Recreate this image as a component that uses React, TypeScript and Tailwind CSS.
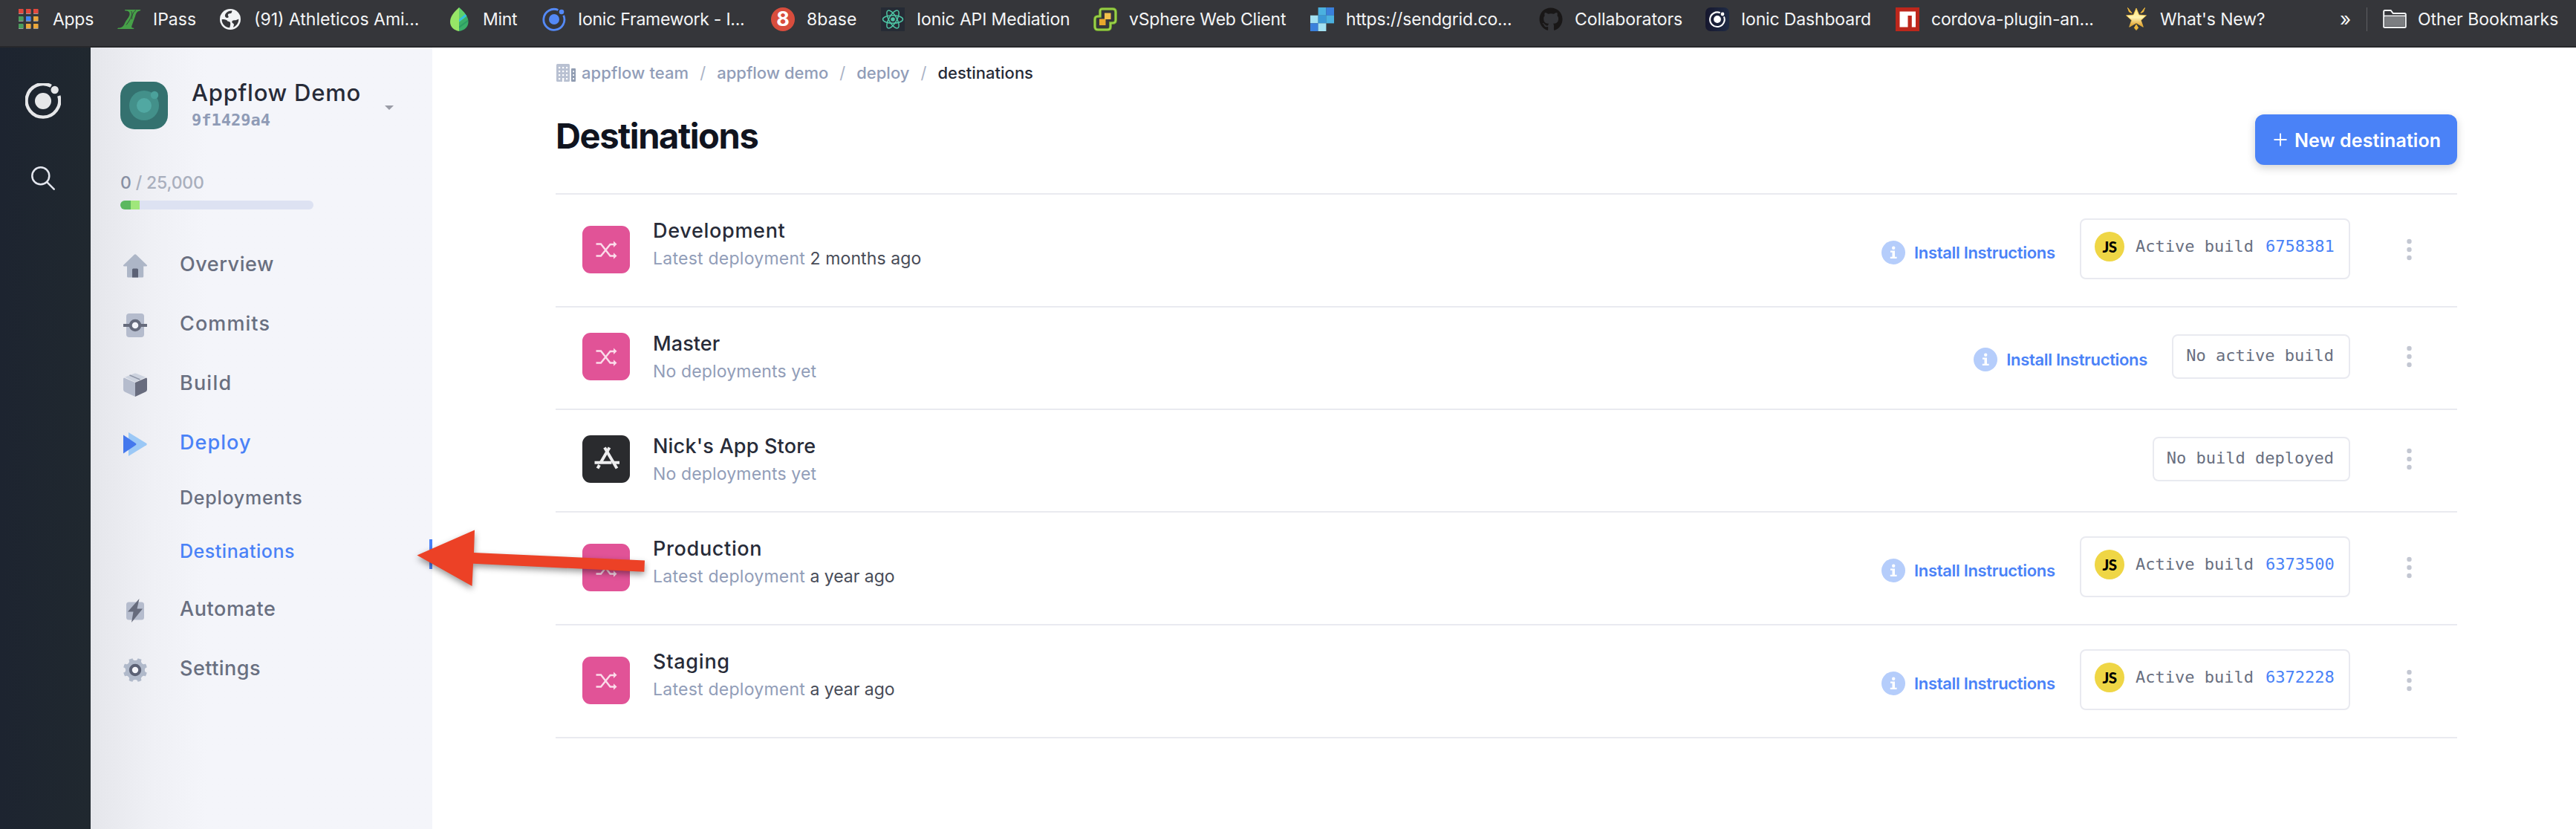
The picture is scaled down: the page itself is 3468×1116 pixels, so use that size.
import type { ReactNode } from "react";
import { FaGithub } from "react-icons/fa";

/* ---------- Bookmark icons ---------- */

function AppsIcon() {
  const cells = [
    ["#e2483d", 2, 2], ["#e2483d", 12, 2], ["#e2483d", 22, 2],
    ["#4a9e5c", 2, 12], ["#4285f4", 12, 12], ["#eba73a", 22, 12],
    ["#4a9e5c", 2, 22], ["#eba73a", 12, 22], ["#eba73a", 22, 22],
  ] as const;
  return (
    <svg className="size-8" viewBox="0 0 32 32">
      {cells.map(([fill, x, y]) => (
        <g key={`${x}-${y}`}>
          <rect x={x} y={y + 1} width="6.4" height="6" fill="#9a9c9f" />
          <rect x={x} y={y} width="6.4" height="6" fill={fill} />
        </g>
      ))}
    </svg>
  );
}

function IPassIcon() {
  return (
    <svg className="size-8" viewBox="0 0 32 32">
      <path
        d="M10 3h21.500l-1 1.600c-3.500.3-5 2.800-6.300 6.800l-4.700 13c-.8 2.500-.2 3 3 3.300l-.5 1.300H0l1-1.500c5.500.2 7.300-2.500 9-6.500 2-4.500 6-7.500 6.500-11.500.3-3-1-5-6-5z"
        fill="#46a048"
      />
      <path d="M18.500 5c2.500 2.500 1 9-6.500 18.500M25 4c-3 1-5.500 6-5.500 12" stroke="#35383c" strokeWidth="0.9" fill="none" />
    </svg>
  );
}

function GlobeIcon() {
  return (
    <svg className="size-8" viewBox="0 0 32 32">
      <circle cx="16" cy="16" r="14" fill="#f1f3f5" />
      <path d="M4.600 16.200c3.600-.4 7 .2 8 2.600 2 .2 3.800.6 3.600 3.200-.1 1.500-.2 2.600-1 5.300C9 27 4.600 22 4.600 16.200z" fill="#35363a" />
      <path d="M18.500 4.700c-.6 1.500-.2 3-2 3.300-2 .3-3.800.6-3.700 2.200.2 1.300 1.500 2 .6 3.300-1 1-3 .2-3.800-.6C8.500 12 8.600 9.500 10.500 7.500 12.500 5.500 15.500 4.300 18.500 4.700z" fill="#35363a" />
      <path d="M27.300 15.500c.2 5-3 9.700-7.300 11.200.2-1.700 1.400-2.500.8-4.200-.6-1.400-2.600-1.300-2.500-3 .1-1.500 1.500-2.300 3.200-2.200 2 .1 3.800-.5 5.800-1.800z" fill="#35363a" />
    </svg>
  );
}

function MintIcon() {
  return (
    <svg className="size-8" viewBox="0 0 32 32">
      <path d="M16 0C9 6.500 4 12 4 19.500 4 26.500 9.500 31 16 32z" fill="#97e567" />
      <path d="M16 0c7 6.500 12.500 12 12.500 19.500C28.500 26.500 23 31 16 32z" fill="#3aae68" />
      <path d="M16 0c5 4.500 8.500 8 10.300 12L16 20z" fill="#5fcf6d" />
      <path d="M26.300 11.500L16 19.500v-3.500l8.500-7z" fill="#32bfe0" />
      <path d="M28 16.500L16 25.500v2.500l12-9z" fill="#2c9b63" />
    </svg>
  );
}

function IonicMark({ color, ring, dot }: { color: string; ring: number; dot: number }) {
  return (
    <>
      <path
        d="M21.400 3.200A14 14 0 1 0 28.700 10.500"
        transform="translate(0 .3)"
        fill="none"
        stroke={color}
        strokeWidth={ring}
      />
      <circle cx="16" cy="16" r="7" fill={color} />
      <circle cx="26" cy="6" r={dot} fill={color} />
    </>
  );
}

function IonicIcon() {
  return (
    <svg className="size-8" viewBox="0 0 32 32">
      <IonicMark color="#5489f6" ring={2.8} dot={3.3} />
    </svg>
  );
}

function EightBaseIcon() {
  return (
    <span className="flex size-8 items-center justify-center rounded-full bg-[#d84d3d] text-[27px] leading-8 font-bold text-white">
      8
    </span>
  );
}

function ReactIcon() {
  return (
    <svg className="size-8" viewBox="0 0 32 32">
      <rect width="32" height="32" fill="#262b35" />
      <g fill="none" stroke="#4ec5a5" strokeWidth="1.500">
        <ellipse cx="16" cy="16" rx="13.500" ry="5.200" />
        <ellipse cx="16" cy="16" rx="13.500" ry="5.200" transform="rotate(60 16 16)" />
        <ellipse cx="16" cy="16" rx="13.500" ry="5.200" transform="rotate(120 16 16)" />
      </g>
      <circle cx="16" cy="16" r="2.800" fill="#4ec5a5" />
    </svg>
  );
}

function VSphereIcon() {
  return (
    <svg className="size-8" viewBox="0 0 32 32">
      <path
        d="M12 2h14q4 0 4 4v11q0 4-4 4h-3v5q0 4-4 4H6q-4 0-4-4V16q0-4 4-4h3V5q0-3 3-3z"
        fill="#35363a"
        stroke="#7fb82c"
        strokeWidth="3.600"
      />
      <path d="M12 2h14q4 0 4 4v11q0 4-4 4h-3v5q0 4-4 4H6q-4 0-4-4V16q0-4 4-4h3V5q0-3 3-3z" fill="none" stroke="#a9dc60" strokeWidth="1.200" />
      <rect x="15" y="7.500" width="8.500" height="8.500" fill="#f3c14c" />
      <rect x="8" y="15.500" width="8.500" height="8.500" fill="#e8a72c" />
    </svg>
  );
}

function SendgridIcon() {
  return (
    <svg className="size-8" viewBox="0 0 32 32">
      <rect x="10.600" width="10.800" height="10.800" fill="#4bb1df" />
      <rect x="21.300" width="10.700" height="10.800" fill="#3a80dc" />
      <rect y="10.700" width="10.700" height="10.700" fill="#a3e1f2" />
      <rect x="10.600" y="10.700" width="10.800" height="10.700" fill="#3b98d6" />
      <rect x="21.300" y="10.700" width="10.700" height="10.700" fill="#4bb1df" />
      <rect y="21.300" width="10.700" height="10.700" fill="#3a80dc" />
      <rect x="10.600" y="21.300" width="10.800" height="10.700" fill="#a3e1f2" />
    </svg>
  );
}

function DashboardIcon() {
  return (
    <svg className="size-8" viewBox="0 0 32 32">
      <defs>
        <linearGradient id="dash" x1="0" x2="1">
          <stop offset="0" stopColor="#16172e" />
          <stop offset="1" stopColor="#1f2b45" />
        </linearGradient>
      </defs>
      <rect width="32" height="32" rx="7" fill="url(#dash)" />
      <g transform="translate(4.800 4.800) scale(.7)">
        <IonicMark color="#ffffff" ring={3} dot={3.4} />
      </g>
    </svg>
  );
}

function NpmIcon() {
  return (
    <svg className="size-8" viewBox="0 0 32 32">
      <rect width="32" height="32" fill="#bd271c" />
      <path d="M5.500 5.500h21.500v21h-5.200V11h-5.300v15.500H5.500z" fill="#fff" />
    </svg>
  );
}

function StarIcon() {
  return (
    <svg className="size-8" viewBox="0 0 32 32">
      <defs>
        <linearGradient id="star" x1="0" x2="0" y1="0" y2="1">
          <stop offset="0" stopColor="#ffe477" />
          <stop offset=".5" stopColor="#fff4b0" />
          <stop offset="1" stopColor="#dd9420" />
        </linearGradient>
      </defs>
      <path d="M4.500.5L10 7.500 6.500 6zM27.500.5L22 7.500 25.500 6zM16 23l2.600 4.500L16 30.500l-2.600-3z" fill="#f0b93c" stroke="#f0b93c" strokeWidth="1" />
      <path d="M16 1l3.800 9 9.700.8-7.200 6.500 3 9L16 21l-9.300 5.300 3-9L2.500 10.800l9.700-.8z" fill="url(#star)" stroke="#eebb40" strokeWidth=".8" />
    </svg>
  );
}

function FolderIcon() {
  return (
    <svg className="size-8" viewBox="0 0 32 32">
      <path d="M1.200 27V5.500q0-1.500 1.500-1.500h8l3 4h15.600q1.500 0 1.500 1.500V25.500q0 1.500-1.500 1.500H2.700q-1.500 0-1.500-1.500z" fill="#35363a" stroke="#f1f3f4" strokeWidth="2" />
      <path d="M2.500 13h27v12.500h-27z" fill="#7c7e81" />
      <path d="M2 11.500h28" stroke="#f1f3f4" strokeWidth="1.800" />
    </svg>
  );
}

function GithubIcon() {
  return <FaGithub className="size-8 text-[#191717]" />;
}

const bookmarks: { label: string; icon: () => ReactNode; cls: string }[] = [
  { label: "Apps", icon: AppsIcon, cls: "w-[135px] tracking-[-0.3px]" },
  { label: "IPass", icon: IPassIcon, cls: "w-[136px]" },
  { label: "(91) Athleticos Ami...", icon: GlobeIcon, cls: "w-[308px]" },
  { label: "Mint", icon: MintIcon, cls: "w-[128px] tracking-[-0.3px]" },
  { label: "Ionic Framework - I...", icon: IonicIcon, cls: "w-[308px] tracking-[-0.24px]" },
  { label: "8base", icon: EightBaseIcon, cls: "w-[148px] tracking-[0.1px]" },
  { label: "Ionic API Mediation", icon: ReactIcon, cls: "w-[286px] tracking-[-0.14px]" },
  { label: "vSphere Web Client", icon: VSphereIcon, cls: "w-[292px] tracking-[-0.2px]" },
  { label: "https://sendgrid.co...", icon: SendgridIcon, cls: "w-[308px] tracking-[-0.16px]" },
  { label: "Collaborators", icon: GithubIcon, cls: "w-[224px] tracking-[-0.07px]" },
  { label: "Ionic Dashboard", icon: DashboardIcon, cls: "w-[256px] tracking-[-0.16px]" },
  { label: "cordova-plugin-an...", icon: NpmIcon, cls: "w-[308px] tracking-[-0.18px]" },
  { label: "What's New?", icon: StarIcon, cls: "w-[290px] tracking-[-0.15px]" },
];

function BookmarkBar() {
  return (
    <header className="flex h-16 items-center border-b-2 border-[#27282b] bg-[#35363a] pb-[10px] pl-[23px] text-[23px] leading-8 whitespace-nowrap text-[#f4f5f6]">
      {bookmarks.map(({ label, icon: Icon, cls }) => (
        <div key={label} className={`flex shrink-0 items-center gap-4 ${cls}`}>
          <Icon />
          <span>{label}</span>
        </div>
      ))}
      <span className="w-[36px] text-[26px] leading-8">»</span>
      <div className="h-8 w-px bg-[#5f6063]" />
      <div className="ml-[21px] flex items-center gap-[15px]">
        <FolderIcon />
        <span>Other Bookmarks</span>
      </div>
    </header>
  );
}

/* ---------- Sidebar ---------- */

function HomeIcon() {
  return (
    <svg className="size-8" viewBox="0 0 32 32">
      <path d="M14.800.8q1.200-1.200 2.400 0L32 15q.2 1.500-1 1.500h-3.800V30q0 1.500-1.500 1.500H6.500Q5 31.500 5 30V16.500H1Q-.2 16.500 0 15z" fill="#adb6c7" />
      <path d="M12 31.500V21q0-1.500 1.500-1.500h5q1.500 0 1.500 1.500v10.500z" fill="#5b6175" />
    </svg>
  );
}

function CommitsIcon() {
  return (
    <svg className="size-8" viewBox="0 0 32 32">
      <rect x="4" width="24" height="32" rx="4" fill="#b5bccd" />
      <rect y="14" width="32" height="4" fill="#666b7c" />
      <circle cx="16" cy="16" r="6.300" fill="#f4f5fa" stroke="#666b7c" strokeWidth="4" />
    </svg>
  );
}

function BuildIcon() {
  return (
    <svg className="size-8" viewBox="0 0 32 32">
      <path d="M14 1q2-.8 4 0l12 4.700L16 12.500 2 5.700z" fill="#cdd3df" />
      <path d="M1 6.500L16 13v19L2 25.500Q0 24.600 0 22.500V8q0-1 1-1.500z" fill="#b5bccd" />
      <path d="M31 6.500L16 13v19l14-6.500q2-.9 2-3V8q0-1-1-1.500z" fill="#686c7e" />
      <path d="M8.500 3l14 6" stroke="#9097a8" strokeWidth="1.500" />
    </svg>
  );
}

function DeployIcon() {
  return (
    <svg className="size-8" viewBox="0 0 32 32">
      <path d="M7 0l24 14.800q1.500 1.200 0 2.400L7 32z" fill="#9bc8f6" />
      <path d="M0 3.500l17 11.500q1 1 0 2L0 28.500z" fill="#4478ed" />
    </svg>
  );
}

function AutomateIcon() {
  return (
    <svg className="size-8" viewBox="0 0 32 32">
      <rect x="4" y="4.500" width="24" height="24" rx="3.500" fill="#b5bccd" />
      <path d="M21.500 0L6 17.500h7.500L11 32l15-18.500h-7.500z" fill="#666b7c" />
    </svg>
  );
}

function SettingsIcon() {
  const notches = [0, 45, 90, 135, 180, 225, 270, 315];
  return (
    <svg className="size-8" viewBox="0 0 32 32">
      <mask id="gear">
        <rect width="32" height="32" fill="#fff" />
        {notches.map((a) => (
          <circle key={a} cx="16" cy="-.5" r="3.600" fill="#000" transform={`rotate(${a} 16 16)`} />
        ))}
      </mask>
      <circle cx="16" cy="16" r="16.200" fill="#b0b9ca" mask="url(#gear)" />
      <circle cx="16" cy="16" r="6.200" fill="#f4f5fa" stroke="#5b6175" strokeWidth="4" />
    </svg>
  );
}

function NavItem({ icon, label, cls }: { icon: ReactNode; label: string; cls: string }) {
  return (
    <div className={`flex h-20 items-center pl-[44px] text-[27px] leading-10 font-medium ${cls}`}>
      <span className="mt-1">{icon}</span>
      <span className="ml-11">{label}</span>
    </div>
  );
}

function Rail() {
  return (
    <aside className="flex w-[122px] shrink-0 flex-col bg-linear-to-r from-[#1d2430] to-[#20282f] pt-12 pl-[34px]">
      <svg className="size-12" viewBox="0 0 48 48">
        <path d="M34.800 3.900A22.300 22.300 0 1 0 45.300 17" fill="none" stroke="#e6e7e9" strokeWidth="4.400" />
        <circle cx="24" cy="24" r="11" fill="#e6e7e9" />
        <circle cx="39.700" cy="9" r="5.200" fill="#e6e7e9" />
      </svg>
      <svg className="mt-16 ml-2 size-8" viewBox="0 0 32 32" fill="none" stroke="#e3e6ee" strokeWidth="2.500" strokeLinecap="round">
        <circle cx="12.800" cy="12.800" r="11.500" />
        <path d="M21.200 21.200L30.700 30.700" />
      </svg>
    </aside>
  );
}

function Sidebar() {
  return (
    <nav className="w-[460px] shrink-0 bg-linear-to-r from-[#e5e6eb] via-[#eff0f5] via-[18%] to-[#f4f5fa] to-[34%]">
      <div className="flex pt-[46px] pl-10">
        <svg className="size-16" viewBox="0 0 64 64">
          <rect width="64" height="64" rx="19" fill="#34716f" />
          <circle cx="32" cy="32" r="20" fill="#43908a" />
          <circle cx="32" cy="32" r="10" fill="#51a8a2" />
          <circle cx="46" cy="18" r="5.200" fill="#4ba19b" />
        </svg>
        <div className="ml-8 w-[260px] whitespace-nowrap">
          <div className="-mt-[5px] text-[31px] leading-10 font-medium tracking-[0.75px] text-[#272b38]">Appflow Demo</div>
          <div className="mt-[2px] font-['DejaVu_Sans_Mono',monospace] text-[22px] leading-[30px] font-bold text-[#8f9bb6]">9f1429a4</div>
        </div>
        <svg className="mt-8 h-[6px] w-3" viewBox="0 0 12 6">
          <path d="M0 0h12L6 6z" fill="#9a9ca6" />
        </svg>
      </div>
      <div className="mt-[53px] pl-10">
        <div className="text-[23px] leading-8 font-medium tracking-[-0.16px] text-[#a9afbd]">
          <span className="text-[#878fa2]">0</span> / 25,000
        </div>
        <div className="mt-[8px] flex h-3 w-[260px] overflow-hidden rounded-full bg-[#dde2f2]">
          <div className="w-[14px] bg-[#5bb85f]" />
          <div className="w-3 bg-[#a0e77b]" />
        </div>
      </div>
      <div className="mt-[34px] text-[#696f80]">
        <NavItem icon={<HomeIcon />} label="Overview" cls="tracking-[0.55px]" />
        <NavItem icon={<CommitsIcon />} label="Commits" cls="tracking-[1.1px]" />
        <NavItem icon={<BuildIcon />} label="Build" cls="tracking-[1.2px]" />
        <NavItem icon={<DeployIcon />} label="Deploy" cls="tracking-[1.05px] text-[#4a82f7]" />
        <div className="pl-[120px] text-[25px] leading-[69px] font-medium">
          <div className="h-[72px] tracking-[0.75px]">Deployments</div>
          <div className="relative h-[72px] tracking-[0.53px] text-[#4a82f7]">
            Destinations
            <span className="absolute top-[18px] right-0 h-10 w-1 bg-[#4a82f7]" />
          </div>
        </div>
        <NavItem icon={<AutomateIcon />} label="Automate" cls="tracking-[0.6px]" />
        <NavItem icon={<SettingsIcon />} label="Settings" cls="tracking-[0.47px]" />
      </div>
    </nav>
  );
}

/* ---------- Main content ---------- */

function BuildingIcon() {
  const cols = [3, 8, 13];
  const rows = [4, 9, 14, 19];
  return (
    <svg className="ml-px h-6 w-[26px]" viewBox="0 0 26 24">
      <rect width="18" height="24" rx="1.500" fill="#b9c1d2" />
      <rect x="20" y="6" width="6" height="18" rx="1" fill="#919db2" />
      {rows.map((y) => cols.map((x) => <rect key={`${x}-${y}`} x={x} y={y} width="2.200" height="2.200" fill="#fff" />))}
      <rect x="8" y="19" width="2.200" height="5" fill="#fff" />
      <rect x="22.200" y="9.300" width="1.800" height="2" fill="#fff" />
      <rect x="22.200" y="14" width="1.800" height="2" fill="#fff" />
      <rect x="22.200" y="19" width="1.800" height="2" fill="#fff" />
    </svg>
  );
}

function Slash() {
  return <span className="w-[38px] text-center font-normal text-[#aab3c6]">/</span>;
}

function WebTile() {
  return (
    <svg className="size-16" viewBox="0 0 64 64">
      <rect width="64" height="64" rx="11" fill="#e15397" />
      <g stroke="#fbdcea" strokeWidth="2.400" fill="none">
        <path d="M18.500 24.500H25L37.500 40.500H42M18.500 40.500H25L37.500 25H42" />
      </g>
      <path d="M42 20.500l4.500 4.300-4.500 4.200zM42 36.200l4.500 4.300-4.500 4.200z" fill="#fbdcea" />
    </svg>
  );
}

function AppStoreTile() {
  return (
    <svg className="size-16" viewBox="0 0 64 64">
      <rect width="64" height="64" rx="11" fill="#2a2b2e" />
      <g stroke="#eeeeef" strokeWidth="4" fill="none">
        <path d="M30 16.500L46.500 44.500" />
        <path d="M36.500 16.500L24.500 37M23 40L20.500 44.500" />
        <path d="M16.500 36.800H39.500M43 36.800H50" />
      </g>
    </svg>
  );
}

type Destination = {
  name: string;
  nameCls: string;
  when?: string;
  whenCls?: string;
  build?: string;
  store?: boolean;
};

const destinations: Destination[] = [
  { name: "Development", nameCls: "tracking-[0.7px]", when: "2 months ago", whenCls: "tracking-[0.1px]", build: "6758381" },
  { name: "Master", nameCls: "tracking-[0.1px]" },
  { name: "Nick's App Store", nameCls: "tracking-[0.2px]", store: true },
  { name: "Production", nameCls: "tracking-[0.66px]", when: "a year ago", whenCls: "tracking-[-0.05px]", build: "6373500" },
  { name: "Staging", nameCls: "tracking-[0.75px]", when: "a year ago", whenCls: "tracking-[-0.05px]", build: "6372228" },
];

function InstallLink() {
  return (
    <a className="mt-2 flex w-[267px] items-center text-[22px] leading-8 font-semibold tracking-[-0.32px] whitespace-nowrap text-[#4a82f7]">
      <svg className="mr-3 size-8" viewBox="0 0 32 32">
        <circle cx="16" cy="16" r="16" fill="#b5cdfb" />
        <circle cx="16.200" cy="9.800" r="2.200" fill="#fff" />
        <path d="M12 13.500h6V21.700h2.600V24H11.800V21.700h2.700V15.800H12z" fill="#fff" />
      </svg>
      Install Instructions
    </a>
  );
}

function BuildBadge({ d }: { d: Destination }) {
  if (d.build) {
    return (
      <div className="mb-0.5 flex h-[82px] w-[364px] items-start rounded-lg border-2 border-[#e9eaf0] pt-4 pl-[18px] font-['DejaVu_Sans_Mono',monospace] text-[22px] leading-10 whitespace-nowrap text-[#696f80]">
        <span className="mr-[15px] flex size-10 items-center justify-center rounded-full bg-[#efd645] pb-px font-[Lato,sans-serif] text-[20.5px] font-black tracking-[-0.5px] text-black">
          JS
        </span>
        Active build
        <a className="ml-4 text-[#4a82f7]">{d.build}</a>
      </div>
    );
  }
  return (
    <div className="flex h-[60px] items-center rounded-lg border-2 border-[#e9eaf0] pr-[20px] pb-[3px] pl-[17px] font-['DejaVu_Sans_Mono',monospace] text-[22px] leading-8 whitespace-nowrap text-[#696f80]">
      {d.store ? "No build deployed" : "No active build"}
    </div>
  );
}

function DestinationRow({ d }: { d: Destination }) {
  const size = d.build ? "h-[152px] pb-0.5" : "h-[138px] pb-1";
  return (
    <li className={`flex items-center border-t-2 border-[#e9eaf0] pl-9 ${size}`}>
      {d.store ? <AppStoreTile /> : <WebTile />}
      <div className="ml-[31px] flex-1 self-start pt-[31px] leading-9">
        <div className={`text-[27px] font-medium text-[#272b38] ${d.nameCls}`}>{d.name}</div>
        <div className="mt-px text-[23px] text-[#919db8]">
          {d.when ? (
            <>
              <span className="tracking-[0.25px]">Latest deployment</span>{" "}
              <span className={`text-[#474b57] ${d.whenCls}`}>{d.when}</span>
            </>
          ) : (
            <span className="tracking-[0.15px]">No deployments yet</span>
          )}
        </div>
      </div>
      {!d.store && <InstallLink />}
      <BuildBadge d={d} />
      <svg className="mr-[61px] ml-[76px] h-8 w-[7px]" viewBox="0 0 7 32" fill="#c3c7d2">
        <circle cx="3.500" cy="5" r="3.200" />
        <circle cx="3.500" cy="16" r="3.200" />
        <circle cx="3.500" cy="27" r="3.200" />
      </svg>
    </li>
  );
}

function Main() {
  return (
    <main className="flex-1 pr-40 pl-[166px]">
      <div className="flex h-[68px] items-center text-[22px] leading-8 font-medium text-[#919db8]">
        <BuildingIcon />
        <span className="ml-2 tracking-[0.1px]">appflow team</span>
        <Slash />
        <span>appflow demo</span>
        <Slash />
        <span>deploy</span>
        <Slash />
        <span className="text-[#272b38]">destinations</span>
      </div>
      <div className="flex h-32 items-start justify-between">
        <h1 className="mt-[23px] text-[47px] leading-[56px] font-bold tracking-[-1.4px] text-[#10141f]">Destinations</h1>
        <button className="mt-[22px] flex h-[68px] w-[272px] items-center rounded-xl bg-[#4a82f7] pl-[25px] text-[25px] font-semibold tracking-[0.1px] whitespace-nowrap text-white shadow-[0_4px_12px_rgba(0,0,0,0.18)]">
          <svg className="mr-[10px] size-[18px]" viewBox="0 0 18 18" stroke="#fff" strokeWidth="1.800">
            <path d="M9 .5v17M.5 9h17" />
          </svg>
          <span className="pt-[3px]">New destination</span>
        </button>
      </div>
      <ul className="border-b-2 border-[#e9eaf0]">
        {destinations.map((d) => (
          <DestinationRow key={d.name} d={d} />
        ))}
      </ul>
    </main>
  );
}

/* Annotation arrow pointing at the active sidebar entry */
function Arrow() {
  return (
    <svg className="absolute top-[700px] left-[550px] h-[110px] w-[340px] drop-shadow-[0_4px_4px_rgba(0,0,0,0.4)]" viewBox="0 0 340 110">
      <path d="M11.500 47.500L89 13.500 88 44 318 54.500 317.300 69.700 87 58.800 85.500 89z" fill="#ec4126" />
    </svg>
  );
}

export default function App() {
  return (
    <div className="relative flex h-[1116px] w-[3468px] flex-col overflow-hidden bg-white font-[Inter,sans-serif]">
      <BookmarkBar />
      <div className="flex flex-1">
        <Rail />
        <Sidebar />
        <Main />
      </div>
      <Arrow />
    </div>
  );
}
